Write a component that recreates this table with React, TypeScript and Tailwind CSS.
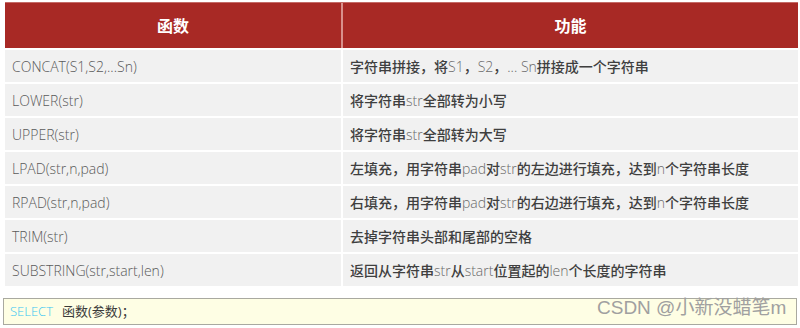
import React from 'react';

/* 字符串函数表 */
type Seg = { t: string; latin?: boolean };

type Row = {
  fn: string;
  desc: Seg[];
};

const L = (t: string): Seg => ({ t, latin: true });
const C = (t: string): Seg => ({ t });

const ROWS: Row[] = [
  { fn: 'CONCAT(S1,S2,...Sn)', desc: [C('字符串拼接，将'), L('S1'), C('，'), L('S2'), C('，'), L('... Sn'), C('拼接成一个字符串')] },
  { fn: 'LOWER(str)', desc: [C('将字符串'), L('str'), C('全部转为小写')] },
  { fn: 'UPPER(str)', desc: [C('将字符串'), L('str'), C('全部转为大写')] },
  { fn: 'LPAD(str,n,pad)', desc: [C('左填充，用字符串'), L('pad'), C('对'), L('str'), C('的左边进行填充，达到'), L('n'), C('个字符串长度')] },
  { fn: 'RPAD(str,n,pad)', desc: [C('右填充，用字符串'), L('pad'), C('对'), L('str'), C('的右边进行填充，达到'), L('n'), C('个字符串长度')] },
  { fn: 'TRIM(str)', desc: [C('去掉字符串头部和尾部的空格')] },
  { fn: 'SUBSTRING(str,start,len)', desc: [C('返回从字符串'), L('str'), C('从'), L('start'), C('位置起的'), L('len'), C('个长度的字符串')] },
];

const FONT = "font-['Open_Sans','Noto_Sans_CJK_SC',sans-serif]";

export default function App() {
  return (
    <div className={`w-[800px] h-[328px] bg-white relative overflow-hidden ${FONT}`}>
      {/* 表格 */}
      <div className="pt-[2px] pl-[5px] pr-[2px]">
        <div className="grid grid-cols-[338px_1fr] h-[46px] bg-[#a82925] border-t border-[#c46a66]">
          <div className="flex items-center justify-center text-white text-[16px] font-bold border-r-2 border-[#d9908c]">函数</div>
          <div className="flex items-center justify-center text-white text-[16px] font-bold">功能</div>
        </div>
        {ROWS.map((r) => (
          <div key={r.fn} className="grid grid-cols-[338px_1fr] h-[34px] border-t-2 border-white bg-[#f1f1f1]">
            <div className="flex items-center pl-[7px] text-[14px] font-light text-[#5a5a5a] border-r-2 border-white">
              {r.fn}
            </div>
            <div className="flex items-center pl-[7px] text-[14px] text-[#3f3f3f] font-medium whitespace-pre">
              {r.desc.map((s, i) =>
                s.latin ? (
                  <span key={i} className="font-light text-[#6a6a6a]">{s.t}</span>
                ) : (
                  <span key={i}>{s.t}</span>
                )
              )}
            </div>
          </div>
        ))}
      </div>

      {/* 语法 */}
      <div className="mt-[12px] ml-[3px] mr-[3px] h-[27px] bg-[#fefee4] border border-[#a9a9a0] flex items-center pl-[6px] text-[13px]">
        <span className="text-[#38c6f2] font-light">SELECT</span>
        <span className="ml-[9px] text-[#3a3a3a]">函数(参数)；</span>
      </div>

      {/* 水印 */}
      <div className="absolute left-[597px] top-[298px] text-[19px] text-[#a0a0a0] font-['Liberation_Sans','Noto_Sans_CJK_SC',sans-serif] leading-none">
        CSDN @小新没蜡笔m
      </div>
    </div>
  );
}
